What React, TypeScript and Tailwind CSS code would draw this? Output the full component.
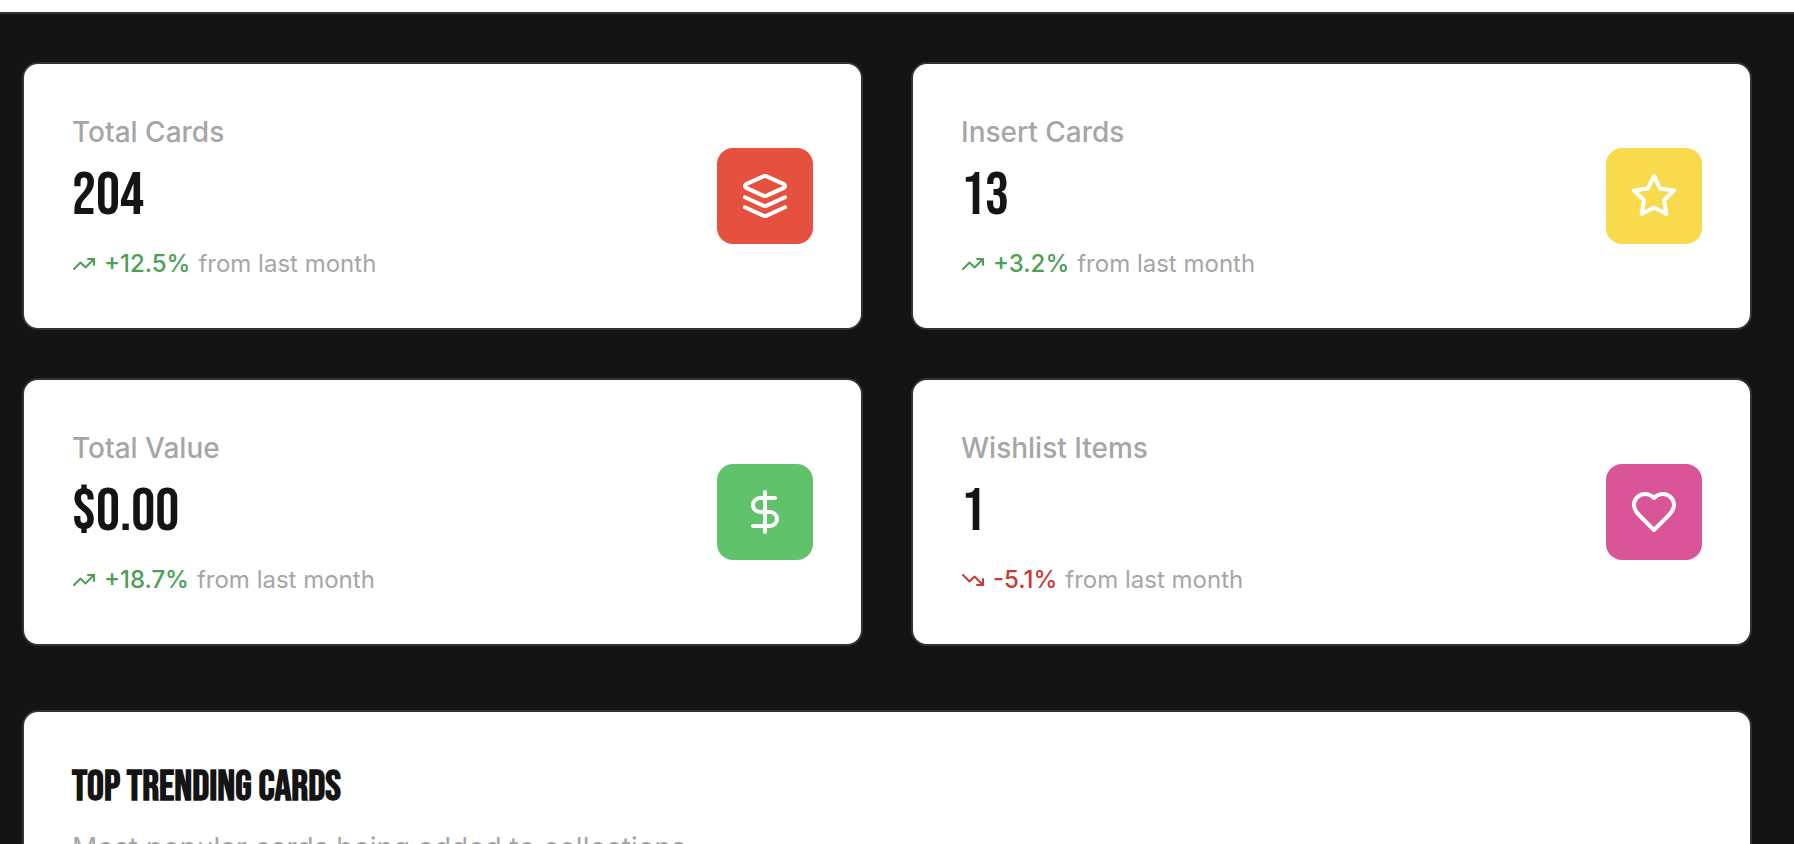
import { DollarSign, TrendingDown, TrendingUp, type LucideIcon } from "lucide-react";
import type { ReactNode } from "react";

type Stat = {
  label: string;
  value: string;
  change: string;
  up: boolean;
  icon: ReactNode;
  tile: string;
};

function Icon({ children }: { children: ReactNode }) {
  return (
    <svg viewBox="0 0 24 24" className="size-12" fill="none" stroke="currentColor" strokeWidth="2" strokeLinecap="round" strokeLinejoin="round" aria-hidden="true">
      {children}
    </svg>
  );
}

const layers = (
  <Icon>
    <path d="m12.83 2.18a2 2 0 0 0-1.66 0L2.6 6.08a1 1 0 0 0 0 1.83l8.58 3.91a2 2 0 0 0 1.66 0l8.58-3.9a1 1 0 0 0 0-1.83Z" />
    <path d="m22 17.65-9.17 4.16a2 2 0 0 1-1.66 0L2 17.65" />
    <path d="m22 12.65-9.17 4.16a2 2 0 0 1-1.66 0L2 12.65" />
  </Icon>
);

const star = (
  <Icon>
    <polygon points="12 2 15.09 8.26 22 9.27 17 14.14 18.18 21.02 12 17.77 5.82 21.02 7 14.14 2 9.27 8.91 8.26 12 2" />
  </Icon>
);

const heart = (
  <Icon>
    <path d="M19 14c1.49-1.46 3-3.21 3-5.5A5.5 5.5 0 0 0 16.5 3c-1.76 0-3 .5-4.5 2-1.5-1.5-2.74-2-4.5-2A5.5 5.5 0 0 0 2 8.5c0 2.3 1.5 4.05 3 5.5l7 7Z" />
  </Icon>
);

const stats: Stat[] = [
  { label: "Total Cards", value: "204", change: "+12.5%", up: true, icon: layers, tile: "bg-[#e5503f]" },
  { label: "Insert Cards", value: "13", change: "+3.2%", up: true, icon: star, tile: "bg-[#f9da4d]" },
  { label: "Total Value", value: "$0.00", change: "+18.7%", up: true, icon: <DollarSign className="size-12" />, tile: "bg-[#60c26b]" },
  { label: "Wishlist Items", value: "1", change: "-5.1%", up: false, icon: heart, tile: "bg-[#da5597]" },
];

function StatCard({ label, value, change, up, icon, tile }: Stat) {
  const Trend: LucideIcon = up ? TrendingUp : TrendingDown;
  return (
    <article className="flex items-center justify-between rounded-2xl border-2 border-[#333333] bg-white p-12">
      <div>
        <h3 className="text-[28px] leading-10 font-medium text-[#a6a6a6]">{label}</h3>
        <p className="mt-2 font-['Bebas_Neue',Oswald,sans-serif] text-6xl leading-18 text-[#141414]">{value}</p>
        <p className="mt-4 flex items-center gap-2 text-2xl leading-8">
          <span className={up ? "flex items-center gap-2 font-medium text-[#4aa153]" : "flex items-center gap-2 font-medium text-[#cb3a31]"}>
            <Trend className="size-6" />
            {change}
          </span>
          <span className="text-[#a6a6a6]">from last month</span>
        </p>
      </div>
      <div className={`flex size-24 items-center justify-center rounded-2xl text-white ${tile}`}>{icon}</div>
    </article>
  );
}

export default function App() {
  return (
    <div className="h-screen overflow-hidden bg-[#141414] font-['Inter',sans-serif]">
      <header className="h-3.5 border-b-2 border-[#333333] bg-white" />
      <main className="pt-12 pr-[42px] pl-[22px]">
        <section className="grid grid-cols-2 gap-12">
          {stats.map((stat) => (
            <StatCard key={stat.label} {...stat} />
          ))}
        </section>
        <section className="mt-16 rounded-2xl border-2 border-[#333333] bg-white p-12">
          <h2 className="font-['Bebas_Neue',Oswald,sans-serif] text-[42px] leading-14 font-bold text-[#141414]">TOP TRENDING CARDS</h2>
          <p className="mt-3 text-[28px] leading-10 text-[#a6a6a6]">Most popular cards being added to collections</p>
        </section>
      </main>
    </div>
  );
}
